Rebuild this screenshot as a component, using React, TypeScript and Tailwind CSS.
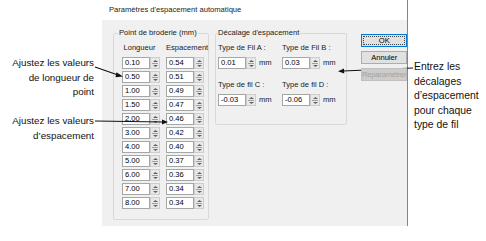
import React from 'react';

const lengths = ['0.10', '0.50', '1.00', '1.50', '2.00', '3.00', '4.00', '5.00', '6.00', '7.00', '8.00'];
const spacings = ['0.54', '0.51', '0.49', '0.47', '0.46', '0.42', '0.40', '0.37', '0.36', '0.34', '0.34'];

const Spin: React.FC<{ value: string }> = ({ value }) => (
    <div className="flex h-[12px] w-[38px]">
        <div className="w-[28px] h-full border border-[#a6a6a6] bg-white pl-[2px] text-[7.6px] leading-[10px] text-black">
            {value}
        </div>
        <div className="w-[10px] h-full border border-[#cdcdcd] bg-[#e8e8e8] flex flex-col items-center justify-center gap-[1px]">
            <svg width="5" height="2" viewBox="0 0 5 2">
                <path d="M0 2 L2.5 0 L5 2 Z" fill="#606060" />
            </svg>
            <div className="w-[6px] h-px bg-[#a0a0a0]" />
            <svg width="5" height="2" viewBox="0 0 5 2">
                <path d="M0 0 L2.5 2 L5 0 Z" fill="#606060" />
            </svg>
        </div>
    </div>
);

const FilField: React.FC<{ label: string; value: string }> = ({ label, value }) => (
    <div className="flex flex-col w-[64px]">
        <span className="leading-[10px]">{label}</span>
        <div className="flex items-center mt-[4px]">
            <Spin value={value} />
            <span className="ml-[3px] leading-[10px]">mm</span>
        </div>
    </div>
);

export default function App() {
    return (
        <div className="relative w-[486px] h-[241px] bg-white flex font-['Liberation_Sans',Arial,sans-serif] overflow-hidden">
            {/* left notes */}
            <div className="w-[102px] pr-[8px] pt-[56px] flex flex-col gap-[14.5px] text-right text-[9.8px] leading-[14.5px] text-[#111]">
                <p>
                    Ajustez les valeurs
                    <br />
                    de longueur de
                    <br />
                    point
                </p>
                <p>
                    Ajustez les valeurs
                    <br />
                    d’espacement
                </p>
            </div>

            {/* dialog */}
            <div className="w-[306px] h-[226px] flex flex-col border-r border-[#868686] text-[7.6px] text-[#1a1a1a]">
                <div className="h-[20px] pl-[7px] pt-[5px] leading-[10px] text-[#222]">
                    Paramètres d'espacement automatique
                </div>
                <div className="flex-1 bg-[#f0f0f0] flex items-start pl-[11px]">
                    <fieldset className="mt-[8px] w-[99px] h-[192px] border border-[#d9d9d9] rounded-[2px] px-[4px]">
                        <legend className="px-[1px] leading-[10px]">Point de broderie (mm)</legend>
                        <div className="pl-[4px] pt-[5px] flex flex-col">
                            <div className="flex gap-[6px] leading-[10px]">
                                <span className="w-[38px] text-center pr-[3px]">Longueur</span>
                                <span className="w-[38px] text-center">Espacement</span>
                            </div>
                            <div className="mt-[4px] flex flex-col gap-[2px]">
                                {lengths.map((l, i) => (
                                    <div key={i} className="flex gap-[6px]">
                                        <Spin value={l} />
                                        <Spin value={spacings[i]} />
                                    </div>
                                ))}
                            </div>
                        </div>
                    </fieldset>

                    <fieldset className="mt-[8px] ml-[6px] w-[122px] h-[97px] border border-[#d9d9d9] rounded-[2px] pl-[2px]">
                        <legend className="leading-[10px] pr-[1px]">Décalage d'espacement</legend>
                        <div className="pt-[5px] flex flex-col gap-[11px]">
                            <div className="flex">
                                <FilField label="Type de Fil A :" value="0.01" />
                                <FilField label="Type de Fil B :" value="0.03" />
                            </div>
                            <div className="flex">
                                <FilField label="Type de fil C :" value="-0.03" />
                                <FilField label="Type de fil D :" value="-0.06" />
                            </div>
                        </div>
                    </fieldset>

                    <div className="ml-[14px] mt-[14px] w-[47px] flex flex-col gap-[4px]">
                        <button className="relative z-10 h-[13px] w-full border border-[#0078d7] bg-[#e1e1e1] text-black p-[1px] flex">
                            <span className="flex-1 flex items-center justify-center border border-dotted border-[#444] leading-[9px]">OK</span>
                        </button>
                        <button className="relative z-10 h-[13px] w-full border border-[#adadad] bg-[#e1e1e1] text-black flex items-center justify-center leading-[9px]">
                            Annuler
                        </button>
                        <button className="relative z-10 h-[13px] w-full border border-[#bfbfbf] bg-[#cccccc] text-[#a3a3a3] overflow-hidden whitespace-nowrap flex items-center justify-center leading-[9px] tracking-[-0.2px]">
                            Reparamétrer
                        </button>
                    </div>
                </div>
            </div>

            {/* right note */}
            <div className="flex-1 pl-[6px] pt-[60px] text-[10.4px] leading-[14.5px] text-[#111]">
                <p>
                    Entrez les
                    <br />
                    décalages
                    <br />
                    d’espacement
                    <br />
                    pour chaque
                    <br />
                    type de fil
                </p>
            </div>

            {/* leader arrows */}
            <svg className="absolute left-0 top-0 pointer-events-none" width="486" height="241" viewBox="0 0 486 241">
                <g stroke="#111" strokeWidth="1.1" fill="none">
                    <line x1="95" y1="67" x2="118" y2="75" />
                    <line x1="95" y1="121" x2="163" y2="122" />
                    <line x1="413" y1="68" x2="343" y2="71" />
                </g>
                <g fill="#111">
                    <path d="M123 76.5 L116.5 72.2 L115.5 77.2 Z" />
                    <path d="M168 122 L162 119.5 L162 124.5 Z" />
                    <path d="M338 71.2 L344 68.5 L344.2 73.5 Z" />
                </g>
            </svg>
        </div>
    );
}
